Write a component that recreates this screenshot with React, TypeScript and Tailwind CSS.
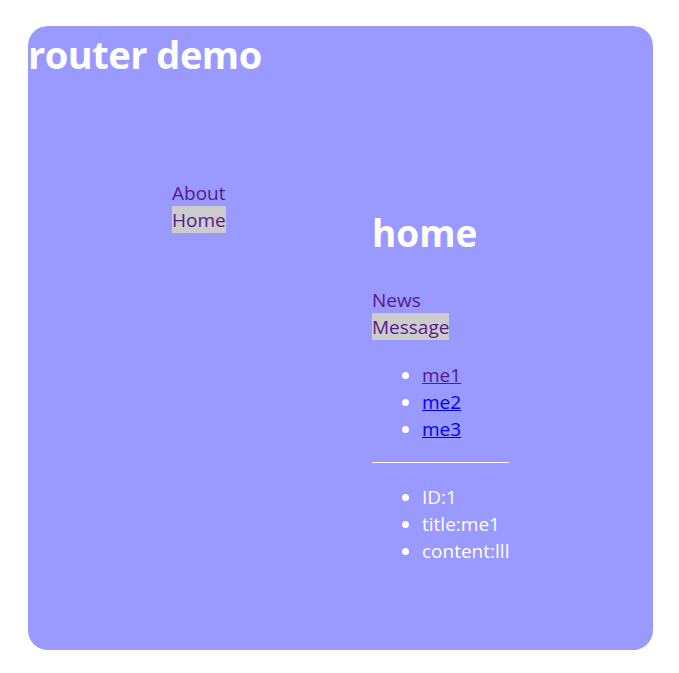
import React from "react";

const font = { fontFamily: '"Open Sans", "Noto Sans", sans-serif' };

export default function App() {
    return (
        <div className="min-h-screen bg-white pt-[26px] pl-[28px]" style={font}>
            <div className="w-[625px] h-[624px] rounded-[20px] bg-[#9999ff] text-white text-[19px] leading-[27px]">
                <h1 className="text-[38px] font-bold leading-[56px] tracking-[-0.5px]">router demo</h1>

                <div className="flex items-start pl-[144px] pt-[96px]">
                    {/* Nav */}
                    <nav className="flex flex-col items-start w-[200px] pt-[1px]">
                        <a href="#about" className="text-[#551a8b] pt-[1px] -mb-[1px]">About</a>
                        <a href="#home" className="text-[#551a8b] bg-[#cccccc] pt-[1px] -mb-[1px] h-[27px]">Home</a>
                    </nav>

                    {/* Home route */}
                    <div className="flex flex-col items-stretch pt-[26px]">
                        <h2 className="text-[37px] font-bold leading-[54px] pt-[2px]">home</h2>
                        <div className="flex flex-col items-start mt-[26px]">
                            <a href="#news" className="text-[#551a8b] pt-[1px] -mb-[1px]">News</a>
                            <a href="#message" className="text-[#551a8b] bg-[#cccccc] pt-[1px] -mb-[1px] h-[27px]">Message</a>
                        </div>
                        <ul className="list-disc pl-[50px] mt-[23px] mb-[18px]">
                            <li><a href="#me1" className="underline text-[#551a8b]">me1</a></li>
                            <li><a href="#me2" className="underline text-[#0000ee]">me2</a></li>
                            <li><a href="#me3" className="underline text-[#0000ee]">me3</a></li>
                        </ul>
                        <hr className="border-t border-t-[#a0a0b0] border-b border-b-white" />
                        <ul className="list-disc pl-[50px] my-[21px]">
                            <li>ID:1</li>
                            <li>title:me1</li>
                            <li>content:lll</li>
                        </ul>
                    </div>
                </div>
            </div>
        </div>
    );
}
